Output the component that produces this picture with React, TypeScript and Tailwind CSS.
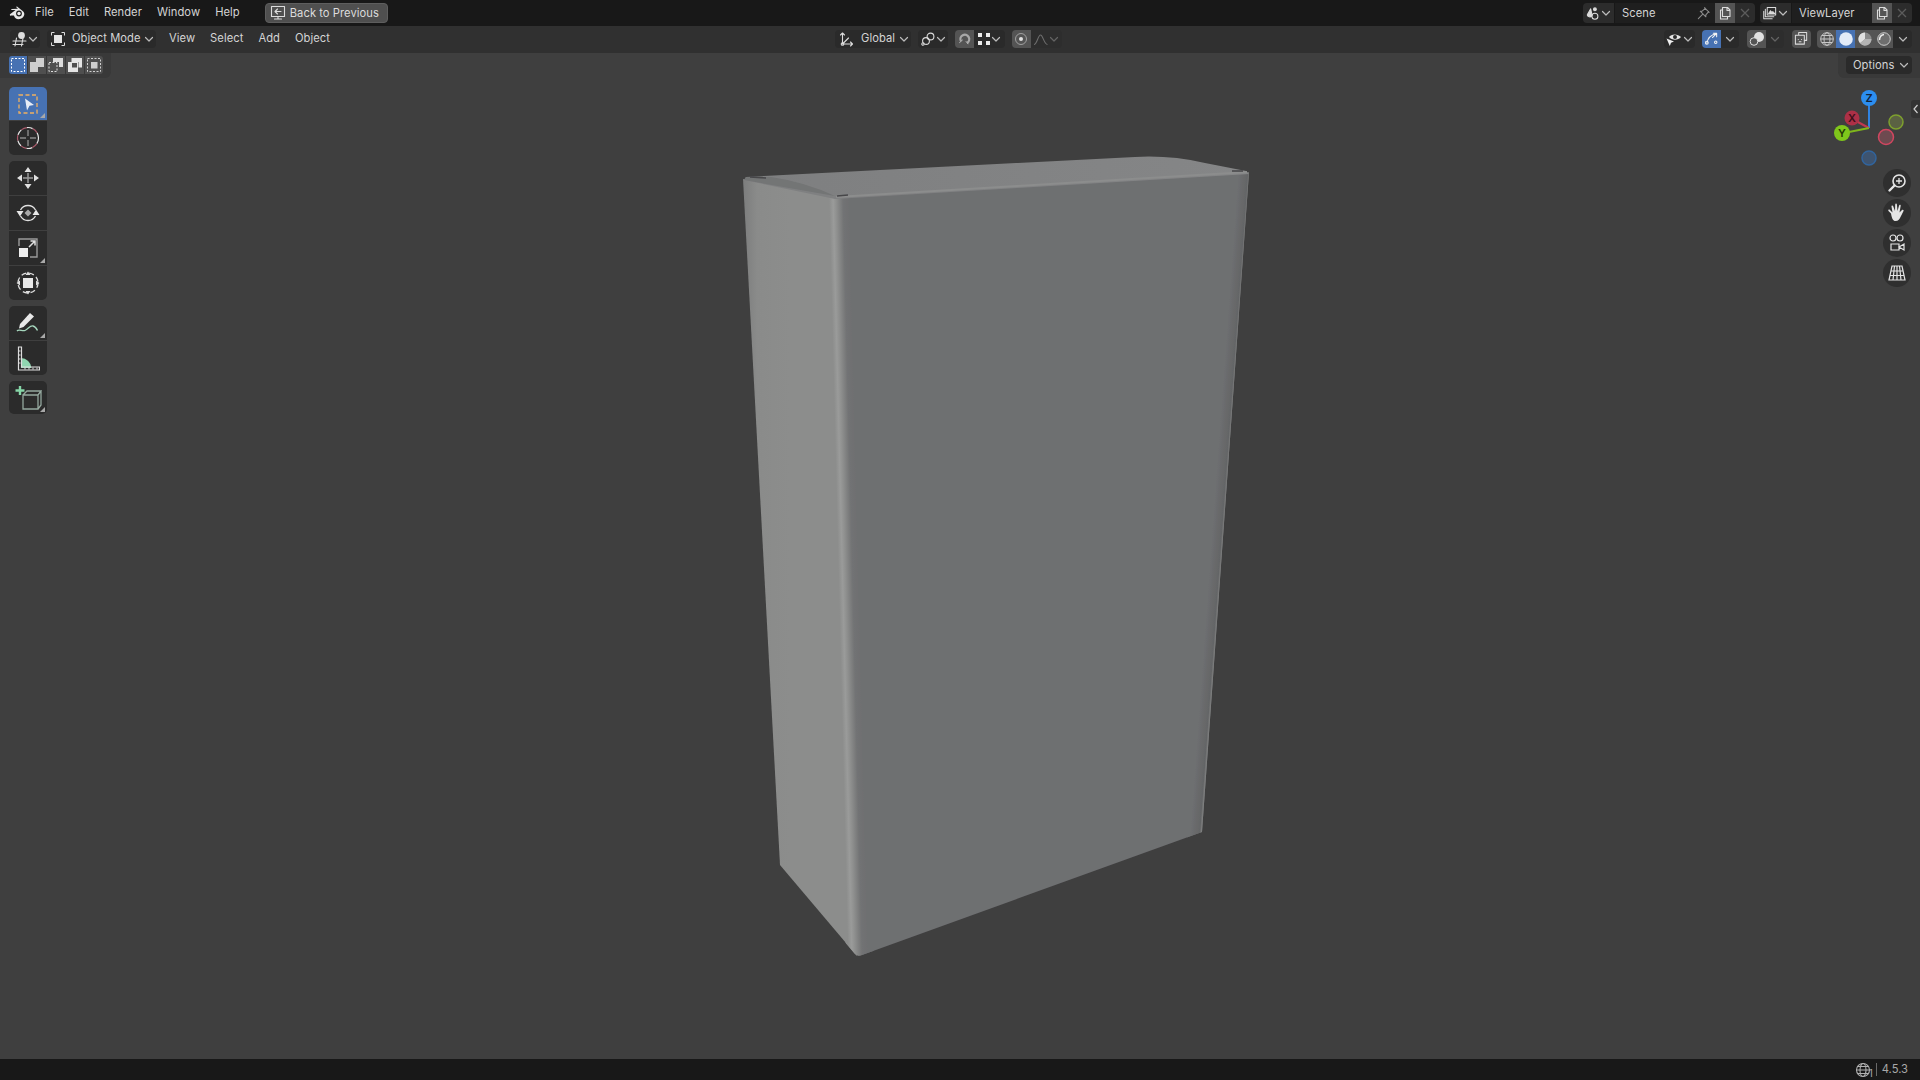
import type { ReactNode } from "react";

const font = { fontFamily: "Inter, 'Noto Sans', sans-serif" };

function Chevron({ dim = false }: { dim?: boolean }) {
  return (
    <svg width="10" height="10" viewBox="0 0 10 10" className={`shrink-0 ${dim ? "opacity-30" : "opacity-80"}`}>
      <path d="M1.500 3.500 5 7l3.500-3.500" fill="none" stroke="#e0e0e0" strokeWidth="1.200" strokeLinecap="round" strokeLinejoin="round" />
    </svg>
  );
}

function Ico({ size = 16, children }: { size?: number; children: ReactNode }) {
  return (
    <svg width={size} height={size} viewBox="0 0 16 16" fill="none" stroke="#dcdcdc" strokeWidth="1.100" strokeLinecap="round" strokeLinejoin="round" className="shrink-0">
      {children}
    </svg>
  );
}

function MenuItem({ label }: { label: string }) {
  return <span className="text-[11.2px] leading-none tracking-[0.05px] text-[#d4d4d4]">{label}</span>;
}

function Logo() {
  return (
    <svg width="18" height="14" viewBox="0 0 18 14" className="shrink-0">
      <path d="M1 8.200 6.600 4H2.800c-.8 0-.8-1 0-1.100L9 2.800 7.500 1.400c-.5-.6.2-1.200.8-.7l5.700 4.600c2.600 2.300 1 6-1.800 7.300-3 1.400-6.500.5-7.300-3L2.200 9.600c-.7.500-1.800-.6-1.200-1.400Z" fill="#e8e8e8" />
      <circle cx="10" cy="7.500" r="2.900" fill="#1b1b1b" />
      <circle cx="10" cy="7.500" r="1.700" fill="#e8e8e8" />
    </svg>
  );
}

function DataBlock({ icon, name, pin, width }: { icon: ReactNode; name: string; pin?: boolean; width: string }) {
  return (
    <div className={`flex h-5 items-center overflow-hidden rounded-[4px] ${width}`}>
      <div className="flex h-full w-[31px] items-center justify-center gap-0 bg-[#2c2c2c]">
        {icon}
        <Chevron />
      </div>
      <div className="ml-px flex h-full flex-1 items-center justify-between bg-[#1f1f1f] pl-[7px] pr-1 text-[11.2px] tracking-[0.05px] text-[#d4d4d4]">
        <span>{name}</span>
        {pin && (
          <Ico size={15}>
            <path d="M9 1.800 14 6.800M10 2.500 6.500 5.500 4.500 5.500 10.500 11.500 10.500 9.500 13.500 6M7.500 8.500 2.500 13.500" stroke="#8c8c8c" />
          </Ico>
        )}
      </div>
      <div className="flex h-full w-5 items-center justify-center bg-[#545454]">
        <Ico>
          <path d="M5.500 2.500h5l2.500 2.500v6.500H5.500ZM10 2.500V5.500h3M5.500 5H3.500v9h7v-2.500" />
        </Ico>
      </div>
      <div className="flex h-full w-5 items-center justify-center bg-[#2c2c2c]">
        <svg width="10" height="10" viewBox="0 0 10 10">
          <path d="M1 1l8 8M9 1l-8 8" stroke="#5c5c5c" strokeWidth="1.300" />
        </svg>
      </div>
    </div>
  );
}

function TopBar() {
  return (
    <div className="flex h-[26px] shrink-0 items-center bg-[#181818] pl-[9px] pr-2">
      <Logo />
      <div className="ml-[8px] flex items-center gap-[15px]">
        <MenuItem label="File" />
        <MenuItem label="Edit" />
        <MenuItem label="Render" />
        <MenuItem label="Window" />
        <MenuItem label="Help" />
      </div>
      <button className="ml-[25px] flex h-5 w-[123px] items-center gap-[4px] rounded-[4px] border border-[#5e5e5e] bg-[#4f4f4f] pl-[4px] text-[11.2px] tracking-[0.05px] text-[#dcdcdc]">
        <Ico>
          <path d="M1.500 1.500h13v10h-13ZM8 11.500v2.500M4.500 14h7M11 6.500H5M7.500 4 5 6.500 7.500 9" />
        </Ico>
        Back to Previous
      </button>
      <div className="ml-auto flex items-center gap-[5px]">
        <DataBlock
          width="w-[172px]"
          name="Scene"
          pin
          icon={
            <Ico size={15}>
              <path d="M5 3 1.500 9c-.8 2.500 4 3.800 5 1L5 3Z" fill="#dcdcdc" />
              <circle cx="9.500" cy="3.500" r="1.500" fill="#dcdcdc" />
              <circle cx="9.500" cy="11" r="3.200" />
            </Ico>
          }
        />
        <DataBlock
          width="w-[152px]"
          name="ViewLayer"
          icon={
            <Ico size={15}>
              <path d="M4.500 1.500h9v8h-9ZM2.500 3.500v8h9M.8 5.500v8h9" />
              <path d="m6 8 2-3 1.500 2 1-1 2 2Z" fill="#dcdcdc" />
            </Ico>
          }
        />
      </div>
    </div>
  );
}

function Seg({ className = "", children }: { className?: string; children: ReactNode }) {
  return <div className={`flex h-[18px] items-center justify-center rounded-[4px] bg-[#2a2a2a] ${className}`}>{children}</div>;
}

function HeaderBar() {
  return (
    <div className="flex h-[27px] shrink-0 items-center bg-[#303030] pb-[2px] pl-[10px] pr-2">
      <Seg className="w-[30px] gap-0">
        <Ico>
          <path d="M1 10h13M1 13.500h10M4.500 7 3 15M11 7 9.500 15" />
          <circle cx="9.500" cy="4.500" r="3.400" fill="#dcdcdc" stroke="none" />
        </Ico>
        <Chevron />
      </Seg>
      <Seg className="ml-[7px] w-[109px] justify-start pl-[3px] pr-[2px]">
        <svg width="16" height="16" viewBox="0 0 16 16" className="shrink-0">
          <rect x="4" y="4" width="8" height="8" fill="#e4e4e4" />
          <path d="M1.500 4.500v-3h3M11.500 1.500h3v3M14.500 11.500v3h-3M4.500 14.500h-3v-3" fill="none" stroke="#dcdcdc" />
        </svg>
        <span className="ml-[6px] text-[11.2px] tracking-[0.05px] text-[#d4d4d4]">Object Mode</span>
        <span className="ml-auto flex"><Chevron /></span>
      </Seg>
      <div className="ml-[13px] flex items-center gap-[15px]">
        <MenuItem label="View" />
        <MenuItem label="Select" />
        <MenuItem label="Add" />
        <MenuItem label="Object" />
      </div>

      <div className="ml-[505px] flex items-center">
        <Seg className="w-[76px] justify-start pl-[4px]">
          <Ico>
            <path d="M3.500 2v11h10M3.500 13l6-6M1.500 4l2-2 2 2M11.500 11l2 2-2 2" />
            <circle cx="3.500" cy="13" r="1.300" />
          </Ico>
          <span className="ml-[6px] text-[11.2px] tracking-[0.05px] text-[#d4d4d4]">Global</span>
          <span className="ml-auto mr-[2px] flex"><Chevron /></span>
        </Seg>
        <Seg className="ml-[7px] w-[30px]">
          <Ico>
            <circle cx="6" cy="10" r="3.400" />
            <circle cx="10.500" cy="5.500" r="3.400" />
            <circle cx="3" cy="13" r="1.200" />
          </Ico>
          <Chevron />
        </Seg>
        <div className="ml-[7px] flex h-[18px] w-[50px] overflow-hidden rounded-[4px]">
          <div className="flex w-[19px] items-center justify-center bg-[#545454]">
            <svg width="15" height="15" viewBox="0 0 16 16" fill="none" className="shrink-0">
              <path d="M4 10.500A4.700 4.700 0 1 1 11 12.500" stroke="#a8a8a8" strokeWidth="2.400" />
              <path d="M2.500 12.500 6 9.500M9.500 11l2.500 3" stroke="#c4c4c4" strokeWidth="1" />
            </svg>
          </div>
          <div className="flex flex-1 items-center justify-center bg-[#2a2a2a]">
            <svg width="14" height="14" viewBox="0 0 14 14" className="shrink-0">
              <path d="M1 1h4v4H1ZM9 1h4v4H9ZM1 9h4v4H1ZM9 9h4v4H9Z" fill="#ececec" />
            </svg>
            <Chevron />
          </div>
        </div>
        <div className="ml-[7px] flex h-[18px] w-[50px] overflow-hidden rounded-[4px]">
          <div className="flex w-[19px] items-center justify-center bg-[#545454]">
            <svg width="14" height="14" viewBox="0 0 14 14" className="shrink-0">
              <circle cx="7" cy="7" r="5.500" fill="none" stroke="#a0a0a0" />
              <circle cx="7" cy="7" r="2" fill="#e0e0e0" />
            </svg>
          </div>
          <div className="flex flex-1 items-center justify-center bg-[#2d2d2d]">
            <svg width="16" height="14" viewBox="0 0 16 14" className="shrink-0 opacity-40">
              <path d="M1 12.500c3 0 4-9.500 6.500-9.500S11 12.500 14.500 12.500" fill="none" stroke="#cfcfcf" strokeWidth="1.100" />
            </svg>
            <Chevron dim />
          </div>
        </div>
      </div>

      <div className="ml-auto flex items-center">
        <Seg className="w-[31px]">
          <svg width="17" height="16" viewBox="0 0 17 16" className="shrink-0">
            <path d="M3 6c2-3.500 9-3.500 12 0-3 3.500-9 3.500-12 0Z" fill="#e4e4e4" />
            <circle cx="9" cy="6" r="2" fill="#2a2a2a" />
            <path d="M.5 7.500 8 10.500l-3 1.200-1.200 3.200Z" fill="#f0f0f0" />
          </svg>
          <Chevron />
        </Seg>
        <div className="ml-[7px] flex h-[18px] w-[37px] overflow-hidden rounded-[4px]">
          <div className="flex w-[19px] items-center justify-center bg-[#4772b3]">
            <Ico size={15}>
              <path d="M3 13C4 8 8 4 13 3M10 2.500h3.500V6M13 3l-4 4" stroke="#f2f2f2" />
              <circle cx="3" cy="12.500" r="1.500" stroke="#f2f2f2" />
              <circle cx="12.500" cy="12" r="1.300" stroke="#f2f2f2" />
            </Ico>
          </div>
          <div className="flex flex-1 items-center justify-center bg-[#2a2a2a]">
            <Chevron />
          </div>
        </div>
        <div className="ml-[8px] flex h-[18px] w-[37px] overflow-hidden rounded-[4px]">
          <div className="flex w-[19px] items-center justify-center bg-[#545454]">
            <svg width="16" height="16" viewBox="0 0 16 16" className="shrink-0">
              <circle cx="10" cy="6" r="5" fill="#e0e0e0" />
              <circle cx="5" cy="10.500" r="3.800" fill="#545454" stroke="#e0e0e0" />
            </svg>
          </div>
          <div className="flex flex-1 items-center justify-center bg-[#2d2d2d]">
            <Chevron dim />
          </div>
        </div>
        <div className="ml-[8px] flex h-[18px] w-[19px] items-center justify-center rounded-[4px] bg-[#545454]">
          <Ico size={15}>
            <path d="M5 4V1.500h8.500V10H11M1.500 4.500H11V14H1.500Z" />
            <path d="M4.500 9h.1M8 9h.1M5.500 11.500h2" stroke="#dcdcdc" />
          </Ico>
        </div>
        <div className="ml-[6px] flex h-[18px] w-[95px] overflow-hidden rounded-[4px]">
          {[0, 1, 2, 3].map((i) => (
            <div key={i} className={`flex w-[19px] items-center justify-center ${i === 1 ? "bg-[#4772b3]" : "bg-[#545454]"}`}>
              <svg width="16" height="16" viewBox="0 0 16 16" className="shrink-0">
                {i === 0 && (
                  <g fill="none" stroke="#c8c8c8">
                    <circle cx="8" cy="8" r="6.300" />
                    <ellipse cx="8" cy="8" rx="3" ry="6.300" />
                    <path d="M1.700 8h12.600M2.800 4.500h10.400M2.800 11.500h10.400" />
                  </g>
                )}
                {i === 1 && <circle cx="8" cy="8" r="6.800" fill="#e3ebf7" />}
                {i === 2 && (
                  <g>
                    <circle cx="8" cy="8" r="6.500" fill="#8c8c8c" />
                    <path d="M8 1.500A6.500 6.500 0 0 0 3 12.200L8 8Z" fill="#e2e2e2" />
                    <path d="M8 8h6.500A6.500 6.500 0 0 1 3 12.200Z" fill="#b4b4b4" />
                  </g>
                )}
                {i === 3 && (
                  <g fill="none" stroke="#cccccc">
                    <circle cx="8" cy="8" r="6.300" fill="#6e6e6e" />
                    <path d="M3.500 9C3.500 6 5.500 4 8 3.500" stroke="#eeeeee" strokeWidth="1.500" />
                  </g>
                )}
              </svg>
            </div>
          ))}
          <div className="flex flex-1 items-center justify-center bg-[#2a2a2a]">
            <Chevron />
          </div>
        </div>
      </div>
    </div>
  );
}

function ToolHeader() {
  const modes = [
    <g key="a"><path d="M1.500 1.500h13v13h-13Z" fill="none" stroke="#ffffff" strokeDasharray="2 1.500" /></g>,
    <g key="b"><path d="M1 5h6V1h8v9H9v5H1Z" fill="#cfcfcf" /></g>,
    <g key="c"><path d="M5 1h10v9h-4V5H5Z" fill="#dcdcdc" /><path d="M1 5.500h8v9H1Z" fill="none" stroke="#dcdcdc" strokeDasharray="2 1.500" /></g>,
    <g key="d"><path d="M4.500 1H15v9.500h-3.500V5h-7Z" fill="#e4e4e4" /><path d="M1 5h10v10H1Z" fill="#e4e4e4" /><rect x="5" y="6" width="5" height="4.500" fill="#4f4f4f" /></g>,
    <g key="e"><path d="M1.500 1.500h13v13h-13Z" fill="none" stroke="#cfcfcf" strokeDasharray="2 1.500" /><rect x="5" y="5" width="6.500" height="6.500" fill="#cfcfcf" /></g>,
  ];
  return (
    <div className="flex h-[25px] w-[111px] items-start rounded-br-[6px] bg-[#393939] pl-[9px] pt-[3px]">
      <div className="flex h-[18px] gap-px overflow-hidden rounded-[3px]">
        {modes.map((m, i) => (
          <div key={i} className={`flex h-full w-[18px] items-center justify-center ${i === 0 ? "bg-[#4772b3]" : "bg-[#4f4f4f]"}`}>
            <svg width="16" height="16" viewBox="0 0 16 16">{m}</svg>
          </div>
        ))}
      </div>
    </div>
  );
}

function ToolBtn({ active, corner, h, children }: { active?: boolean; corner?: boolean; h: string; children: ReactNode }) {
  return (
    <div className={`relative flex w-[38px] items-center justify-center ${h} ${active ? "bg-[#4772b3]" : "bg-[#2b2b2b]"}`}>
      {children}
      {corner && (
        <svg width="5" height="5" viewBox="0 0 6 6" className="absolute bottom-[2px] right-[2px]">
          <path d="M6 0v6H0Z" fill="#a8a8a8" />
        </svg>
      )}
    </div>
  );
}

function ToolGroup({ children }: { children: ReactNode }) {
  return <div className="flex flex-col gap-px overflow-hidden rounded-[5px]">{children}</div>;
}

function Toolbar() {
  return (
    <div className="absolute left-[9px] top-[34px] flex flex-col gap-[6px]">
      <ToolGroup>
        <ToolBtn active corner h="h-[33px]">
          <svg width="24" height="24" viewBox="0 0 24 24">
            <path d="M3 3h18v18H3Z" fill="none" stroke="#f0b060" strokeWidth="1.300" strokeDasharray="4 2.500" />
            <path d="M9 6.500 18 13l-4.500.8L11 18.500Z" fill="#e6ecf6" />
          </svg>
        </ToolBtn>
        <ToolBtn h="h-[34px]">
          <svg width="26" height="26" viewBox="0 0 26 26" fill="none">
            <circle cx="13" cy="13" r="10.500" stroke="#e8e8e8" strokeWidth="1.200" strokeDasharray="6 6" />
            <circle cx="13" cy="13" r="10.500" stroke="#a85a6a" strokeWidth="1.200" strokeDasharray="6 6" strokeDashoffset="6" />
            <path d="M13 5v6M13 15v6M5 13h6M15 13h6" stroke="#8a8a8a" strokeWidth="1.400" />
          </svg>
        </ToolBtn>
      </ToolGroup>
      <ToolGroup>
        <ToolBtn h="h-[34px]">
          <svg width="26" height="26" viewBox="0 0 26 26" fill="#e0e0e0">
            <path d="M13 2 9.500 7h7ZM13 24l-3.500-5h7ZM2 13l5-3.500v7ZM24 13l-5-3.500v7Z" />
            <path d="M13 8v10M8 13h10" stroke="#9a9a9a" strokeWidth="1.500" />
          </svg>
        </ToolBtn>
        <ToolBtn h="h-[34px]">
          <svg width="26" height="26" viewBox="0 0 26 26" fill="none">
            <path d="M5.500 10a8.500 8.500 0 0 1 15 0M5.500 16a8.500 8.500 0 0 0 15 0" stroke="#e0e0e0" strokeWidth="1.300" />
            <path d="m13 9.500 3.500 3.500-3.500 3.500L9.500 13Z" fill="#a8a8a8" />
            <path d="M1.500 11h7L5 16.500ZM24.500 15h-7L21 9.500Z" fill="#e8e8e8" />
          </svg>
        </ToolBtn>
        <ToolBtn corner h="h-[34px]">
          <svg width="26" height="26" viewBox="0 0 26 26" fill="none">
            <path d="M4 11V4h18v18h-7" stroke="#9a9a9a" strokeWidth="1.400" />
            <rect x="4" y="13" width="9" height="9" fill="#eeeeee" />
            <path d="M14 12l6-6M15.500 6H20v4.500" stroke="#e0e0e0" strokeWidth="1.500" />
          </svg>
        </ToolBtn>
        <ToolBtn h="h-[34px]">
          <svg width="26" height="26" viewBox="0 0 26 26" fill="none">
            <circle cx="13" cy="13" r="10" stroke="#dcdcdc" strokeWidth="1.300" strokeDasharray="5 3" />
            <rect x="8" y="8" width="10" height="10" fill="#e8e8e8" />
            <path d="M13 1.500 10.500 5h5ZM13 24.500 10.500 21h5ZM1.500 13 5 10.500v5ZM24.500 13 21 10.500v5Z" fill="#dcdcdc" />
          </svg>
        </ToolBtn>
      </ToolGroup>
      <ToolGroup>
        <ToolBtn corner h="h-[34px]">
          <svg width="28" height="26" viewBox="0 0 28 26" fill="none">
            <path d="m6 14 10-11 4 3.500L9.500 17 5 18.500Z" fill="#e8e8e8" />
            <path d="M3 21c2-2.500 5 .5 8-.5 3.500-1.500 4.500-5 8-4.500 2.500.4 3.500 2.500 4.500 4.500" stroke="#a5d6bd" strokeWidth="1.300" />
          </svg>
        </ToolBtn>
        <ToolBtn h="h-[34px]">
          <svg width="24" height="26" viewBox="0 0 24 26" fill="none">
            <path d="M5 13a11 11 0 0 1 10.500 10H5Z" fill="#8fd6b0" />
            <path d="M2.500 2h3v20h18v3h-21Z" fill="none" stroke="#dedede" strokeWidth="1.200" />
            <path d="M2.500 6h2M2.500 10h2M2.500 14h2M2.500 18h2M9 22.500v2M13 22.500v2M17 22.500v2M21 22.500v2" stroke="#dedede" />
          </svg>
        </ToolBtn>
      </ToolGroup>
      <ToolGroup>
        <ToolBtn corner h="h-[33px]">
          <svg width="28" height="26" viewBox="0 0 28 26" fill="none">
            <path d="M9 10h15v14H9ZM9 10l4-4h14l-3 4M24 24l3-4V6" stroke="#94a89e" strokeWidth="1.300" />
            <path d="M6 1v9M1.500 5.500h9" stroke="#86d6a8" strokeWidth="2.400" />
          </svg>
        </ToolBtn>
      </ToolGroup>
    </div>
  );
}

function Gizmo() {
  return (
    <svg width="80" height="100" viewBox="1830 84 80 100" className="absolute left-[1830px] top-[31px]">
      <path d="M1869 128V104" stroke="#2f83e3" strokeWidth="2" />
      <path d="M1869 128 1856 121" stroke="#c4384f" strokeWidth="2" />
      <path d="M1869 128 1849 132" stroke="#7fb61c" strokeWidth="2" />
      <circle cx="1896" cy="122" r="7" fill="#5b6243" stroke="#7ea02e" strokeWidth="1.500" />
      <circle cx="1886" cy="137" r="7.500" fill="#6e4a50" stroke="#d14660" strokeWidth="1.500" />
      <circle cx="1869" cy="158" r="7" fill="#3e5470" stroke="#31649d" strokeWidth="1.500" />
      <circle cx="1852" cy="118" r="7.500" fill="#ac3047" />
      <circle cx="1842" cy="133" r="8" fill="#7fc71b" />
      <circle cx="1869" cy="98" r="8" fill="#2c8ef0" />
      <text x="1869" y="102" textAnchor="middle" fontSize="11" fontWeight="600" fill="#11233a" style={font}>Z</text>
      <text x="1852" y="122" textAnchor="middle" fontSize="11" fontWeight="600" fill="#3c0e18" style={font}>X</text>
      <text x="1842" y="137" textAnchor="middle" fontSize="11" fontWeight="600" fill="#243a06" style={font}>Y</text>
    </svg>
  );
}

function NavButtons() {
  return (
    <div className="absolute right-[9px] top-[116px] flex flex-col gap-[2px]">
      <div className="flex h-[28px] w-[28px] items-center justify-center rounded-full bg-[#2f2f2f]">
        <svg width="20" height="20" viewBox="0 0 20 20" fill="none">
          <circle cx="12" cy="8" r="6" stroke="#e6e6e6" strokeWidth="1.600" />
          <path d="M12 5v6M9 8h6" stroke="#e6e6e6" strokeWidth="1.300" />
          <path d="M7.500 12.500 2.500 17.500" stroke="#e6e6e6" strokeWidth="2.400" strokeLinecap="round" />
        </svg>
      </div>
      <div className="flex h-[28px] w-[28px] items-center justify-center rounded-full bg-[#2f2f2f]">
        <svg width="20" height="20" viewBox="0 0 20 20">
          <path d="M4 10.500 1.500 8c-.8-1 .5-2 1.500-1l2.500 2.500-1-6c-.2-1.200 1.400-1.500 1.700-.3L8 8 8.200 1.500c0-1.200 1.600-1.200 1.700 0L10.500 8l1.600-5.600c.3-1.200 1.800-.8 1.600.4L12.500 9.500l2.500-2.500c1-.9 2.200.2 1.400 1.200L13.500 14c-1 2-2 4-5 4-2.500 0-3.500-2-4.500-7.500Z" fill="#e4e4e4" />
        </svg>
      </div>
      <div className="flex h-[28px] w-[28px] items-center justify-center rounded-full bg-[#2f2f2f]">
        <svg width="20" height="20" viewBox="0 0 20 20" fill="none" stroke="#e4e4e4" strokeWidth="1.200">
          <circle cx="6" cy="5" r="3" />
          <circle cx="13" cy="5" r="3" />
          <path d="M4 11h8v6H4ZM12 14l5-3v6Z" />
        </svg>
      </div>
      <div className="flex h-[28px] w-[28px] items-center justify-center rounded-full bg-[#2f2f2f]">
        <svg width="20" height="20" viewBox="0 0 20 20" fill="none" stroke="#e4e4e4" strokeWidth="1.200">
          <path d="M5 3h10l3 14H2ZM10 3v14M3.800 8h12.400M2.800 12.500h14.400M7.500 3 6 17M12.500 3 14 17" />
        </svg>
      </div>
    </div>
  );
}

function Box() {
  return (
    <svg width="1920" height="1080" viewBox="0 0 1920 1080" className="absolute left-0 top-[-53px]">
      <defs>
        <filter id="soft" x="-5%" y="-5%" width="110%" height="110%">
          <feGaussianBlur stdDeviation="0.7" />
        </filter>
        <clipPath id="shape">
          <path d="M743 179 833 197 1249 172 1202 832 862 955Q857 957 854 953L780 865Z" />
        </clipPath>
        <linearGradient id="left" x1="743" y1="0" x2="790" y2="0" gradientUnits="userSpaceOnUse">
          <stop offset="0" stopColor="#7c7d7d" />
          <stop offset="0.3" stopColor="#8a8b8a" />
          <stop offset="1" stopColor="#8c8d8c" />
        </linearGradient>
        <linearGradient id="ridge" x1="838.500" y1="577.100" x2="858.500" y2="576.600" gradientUnits="userSpaceOnUse">
          <stop offset="0" stopColor="#8c8d8c" />
          <stop offset="0.2" stopColor="#9a9b9a" />
          <stop offset="0.35" stopColor="#8f908f" />
          <stop offset="0.7" stopColor="#727374" />
          <stop offset="1" stopColor="#6e6f71" />
        </linearGradient>
        <linearGradient id="rightEdge" x1="1214.600" y1="499.200" x2="1225.600" y2="500" gradientUnits="userSpaceOnUse">
          <stop offset="0" stopColor="#6e6f71" />
          <stop offset="0.85" stopColor="#646566" />
          <stop offset="1" stopColor="#7d7e7e" />
        </linearGradient>
        <linearGradient id="top" x1="745" y1="0" x2="1247" y2="0" gradientUnits="userSpaceOnUse">
          <stop offset="0" stopColor="#7e7f80" />
          <stop offset="1" stopColor="#858687" />
        </linearGradient>
      </defs>
      <g filter="url(#soft)">
        <path d="M743 179 833 197 857 956 780 865Z" fill="url(#left)" />
        <path d="M833 198 1249 172 1202 832 862 955Q857 957 854 953Z" fill="#6e6f71" />
        <g clipPath="url(#shape)">
          <path d="M1236 165 1260 165 1210 840 1187 840Z" fill="url(#rightEdge)" />
          <path d="M824 190 850 190 874 960 846 960Z" fill="url(#ridge)" />
        </g>
        <path d="M746 177 1135 157Q1170 155 1205 163L1246 171 1249 174 835 199 744 180Z" fill="url(#top)" />
        <path d="M771 177Q805 182 835 196L744 180 746 177Z" fill="#737475" />
        <path d="M836 197 1247 172" stroke="#8c8d8d" strokeWidth="2" />
        <path d="M750 177l16 1M837 196l11-1M1232 171l11 0" stroke="#47474a" strokeWidth="1.500" />
      </g>
    </svg>
  );
}

export default function App() {
  return (
    <div className="flex h-screen w-screen flex-col overflow-hidden whitespace-nowrap bg-[#3f3f3f]" style={font}>
      <TopBar />
      <HeaderBar />
      <div className="relative flex-1 overflow-hidden bg-[#3f3f3f]">
        <Box />
        <ToolHeader />
        <div className="absolute right-0 top-0 flex h-[25px] w-[82px] items-start justify-end rounded-bl-[6px] bg-[#393939] pr-2 pt-[3px]">
          <div className="flex h-[18px] w-[66px] items-center justify-between rounded-[4px] bg-[#2a2a2a] pl-[7px] pr-[3px] text-[11.2px] tracking-[0.05px] text-[#d4d4d4]">
            Options
            <Chevron />
          </div>
        </div>
        <Toolbar />
        <Gizmo />
        <NavButtons />
        <div className="absolute right-0 top-[47px] flex h-[18px] w-[9px] items-center justify-center rounded-l-[3px] bg-[#333333]">
          <svg width="6" height="10" viewBox="0 0 6 10">
            <path d="M4.500 1 1 5l3.500 4" fill="none" stroke="#cfcfcf" strokeWidth="1.200" />
          </svg>
        </div>
      </div>
      <div className="flex h-[21px] shrink-0 items-center justify-end bg-[#181818] pr-[12px] text-[11.2px] text-[#a8a8a8]">
        <svg width="16" height="16" viewBox="0 0 16 16" fill="none" stroke="#b0b0b0" strokeWidth="1.100">
          <circle cx="8" cy="8" r="6.500" />
          <ellipse cx="8" cy="8" rx="3" ry="6.500" />
          <path d="M1.500 8h13M2.600 4.500h10.800M2.600 11.500h10.800" />
        </svg>
        <span className="ml-[-2px] mt-[6px] text-[10px] leading-none">1</span>
        <span className="ml-[3px] mr-[5px] h-[13px] w-px bg-[#6a6a6a]" />
        <span>4.5.3</span>
      </div>
    </div>
  );
}
